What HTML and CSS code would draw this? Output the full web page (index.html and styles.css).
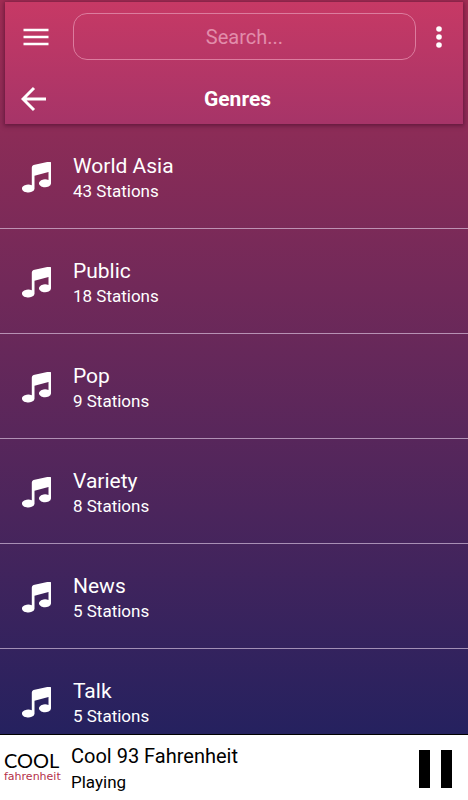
FILE: index.html
```html
<!DOCTYPE html>
<html lang="en">
<head>
<meta charset="utf-8">
<meta name="viewport" content="width=device-width, initial-scale=1">
<title>Genres</title>
<link rel="stylesheet" href="styles.css">
</head>
<body>
<svg class="sprite" aria-hidden="true">
  <symbol id="note" viewBox="0 0 30 32">
    <path d="M9.800 5.500Q9.800 3.700 11.500 3.100L27 -.4Q29 -.8 29 1V21.500A6 4 0 1 1 26.500 18.100V10L12.500 13.800V27A6.300 4 0 1 1 9.800 23.200Z"/>
  </symbol>
</svg>
<div class="app">
  <header class="header">
    <div class="toolbar">
      <button class="icon-button" type="button" aria-label="Menu">
        <svg width="26" height="18" viewBox="0 0 26 18"><path d="M.5 2h25M.5 9h25M.5 16h25" stroke="currentColor" stroke-width="2.600"/></svg>
      </button>
      <input class="search" type="text" placeholder="Search..." aria-label="Search">
      <button class="icon-button" type="button" aria-label="More options">
        <svg width="6" height="22" viewBox="0 0 6 22" fill="currentColor"><circle cx="3" cy="3" r="2.800"/><circle cx="3" cy="11" r="2.800"/><circle cx="3" cy="19" r="2.800"/></svg>
      </button>
    </div>
    <div class="titlebar">
      <button class="icon-button" type="button" aria-label="Back">
        <svg width="26" height="26" viewBox="0 0 26 26"><path d="M25 13H2.500M13 2L2 13l11 11" fill="none" stroke="currentColor" stroke-width="3"/></svg>
      </button>
      <h1 class="title">Genres</h1>
    </div>
  </header>
  <main class="genres">
    <ul class="list">
      <li><a class="row" href="#world-asia"><svg class="note"><use href="#note"/></svg><span class="text"><span class="name">World Asia</span><span class="count">43 Stations</span></span></a></li>
      <li><a class="row" href="#public"><svg class="note"><use href="#note"/></svg><span class="text"><span class="name">Public</span><span class="count">18 Stations</span></span></a></li>
      <li><a class="row" href="#pop"><svg class="note"><use href="#note"/></svg><span class="text"><span class="name">Pop</span><span class="count">9 Stations</span></span></a></li>
      <li><a class="row" href="#variety"><svg class="note"><use href="#note"/></svg><span class="text"><span class="name">Variety</span><span class="count">8 Stations</span></span></a></li>
      <li><a class="row" href="#news"><svg class="note"><use href="#note"/></svg><span class="text"><span class="name">News</span><span class="count">5 Stations</span></span></a></li>
      <li><a class="row" href="#talk"><svg class="note"><use href="#note"/></svg><span class="text"><span class="name">Talk</span><span class="count">5 Stations</span></span></a></li>
    </ul>
  </main>
  <footer class="player">
    <div class="logo"><span class="logo-top">COOL</span><span class="logo-sub">fahrenheit</span></div>
    <div class="text now">
      <span class="station">Cool 93 Fahrenheit</span>
      <span class="status">Playing</span>
    </div>
    <button class="pause" type="button" aria-label="Pause">
      <svg width="34" height="38" viewBox="0 0 34 38" fill="currentColor"><path d="M1 0h11v38H1zM23 0h11v38H23z"/></svg>
    </button>
  </footer>
</div>
</body>
</html>
```
FILE: styles.css
```css
* {
  box-sizing: border-box;
}

body {
  margin: 0;
  font-family: Roboto, "Liberation Sans", sans-serif;
  color: #fff;
}

button {
  padding: 0;
  border: 0;
  background: none;
  color: inherit;
  cursor: pointer;
}

svg {
  display: block;
}

.sprite {
  display: none;
}

.app {
  display: flex;
  flex-direction: column;
  height: 100vh;
  background: linear-gradient(#a12d54 0, #8c2c57 130px, #25215f calc(100vh - 66px));
}

.header {
  flex: none;
  margin: 2px 5px 0;
  padding: 11px 9px 0 16px;
  background: linear-gradient(#c73965, #a63468);
  box-shadow: 0 1px 4px 1px rgba(60, 5, 35, 0.5);
}

.toolbar {
  display: flex;
  align-items: center;
}

.icon-button {
  display: flex;
  align-items: center;
  justify-content: center;
  flex: none;
  width: 30px;
  height: 30px;
}

.search {
  flex: 1;
  min-width: 0;
  height: 47px;
  margin: 0 8px 0 22px;
  padding: 0 12px;
  border: 1px solid #dc7c9e;
  border-radius: 14px;
  background: transparent;
  color: #fff;
  font: 20px/24px Roboto, "Liberation Sans", sans-serif;
  text-align: center;
}

.search::placeholder {
  color: #e28dab;
  opacity: 1;
}

.titlebar {
  display: grid;
  grid-template-columns: 30px 1fr 30px;
  align-items: center;
  height: 64px;
  padding-top: 14px;
}

.titlebar .icon-button {
  width: 26px;
}

.title {
  margin: 0;
  font-size: 21px;
  line-height: 24px;
  font-weight: 700;
  text-align: center;
}

.genres {
  flex: 1;
  min-height: 0;
  overflow: hidden;
}

.list {
  margin: 0;
  padding: 0;
  list-style: none;
}

.row {
  display: flex;
  align-items: center;
  gap: 21px;
  height: 105px;
  padding: 3px 22px 0;
  border-bottom: 1px solid rgba(235, 215, 240, 0.6);
  color: #fff;
  text-decoration: none;
}

.note {
  flex: none;
  width: 30px;
  height: 32px;
  overflow: visible;
  fill: #fff;
}

.text {
  display: flex;
  flex-direction: column;
}

.name {
  font-size: 21px;
  line-height: 26px;
}

.count {
  font-size: 17px;
  line-height: 24px;
}

.player {
  display: flex;
  align-items: center;
  flex: none;
  height: 66px;
  padding: 2px 16px 0 4px;
  border-top: 1px solid #000;
  background: #fff;
  color: #000;
}

.logo {
  display: flex;
  flex-direction: column;
  flex: none;
  width: 58px;
}

.logo-top {
  font-family: Lato, sans-serif;
  font-size: 20px;
  line-height: 16px;
}

.logo-sub {
  color: #b5304a;
  font-family: "DejaVu Sans", sans-serif;
  font-size: 11px;
  line-height: 18px;
}

.now {
  flex: 1;
  min-width: 0;
  padding-left: 9px;
}

.station {
  font-size: 20px;
  line-height: 26px;
}

.status {
  font-size: 17px;
  line-height: 26px;
}

.pause {
  flex: none;
}
```
